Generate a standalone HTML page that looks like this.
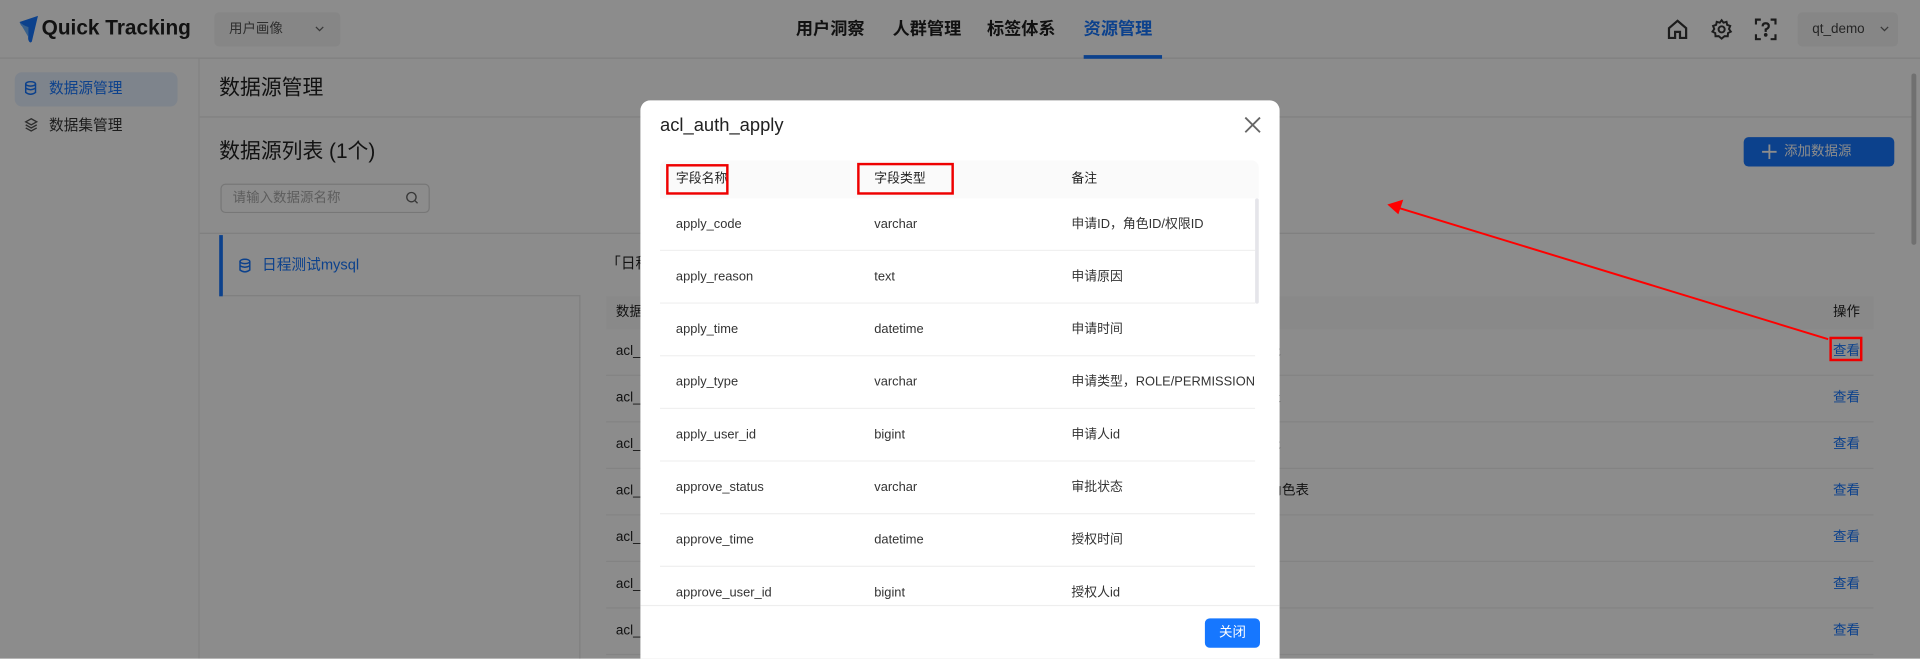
<!DOCTYPE html>
<html><head><meta charset="utf-8">
<style>
*{box-sizing:border-box;margin:0;padding:0}
html,body{width:1920px;height:659px;overflow:hidden;background:#fff}
body{font-family:"Liberation Sans","Noto Sans CJK SC",sans-serif;color:#222;line-height:1.2}
#w{position:absolute;left:0;top:0;width:1568px;height:538px;transform:scale(1.22449);transform-origin:0 0;background:#fff;overflow:hidden}
.a{position:absolute;white-space:nowrap}
.hdr{position:absolute;left:0;top:0;width:1568px;height:48px;border-bottom:1px solid #e8e8e8;background:#fff}
.nav{font-size:14px;font-weight:bold;color:#1f1f1f;top:15px}
.sb{position:absolute;left:0;top:48px;width:163px;height:490px;border-right:1px solid #eee;background:#fff}
.row{position:absolute;left:495px;width:1035px;height:38px;border-bottom:1px solid #eee;font-size:11px}
.row span{top:12px!important}
.mask{position:absolute;left:0;top:0;width:1568px;height:538px;background:rgba(0,0,0,.45)}
.modal{position:absolute;left:523px;top:82px;width:522px;height:470px;background:#fff;border-radius:8px;overflow:hidden}
.mr{position:absolute;left:16px;width:486px;height:43px;border-bottom:1px solid #f0f0f0;font-size:10.5px;color:#333}
.mr span{position:absolute;top:14px;white-space:nowrap;line-height:14px}
</style></head><body>
<div id="w">
<div class="hdr">
 <svg class="a" style="left:15px;top:12px" width="18" height="24" viewBox="0 0 18 24"><path d="M1 6 L16 1 L11 22 Q9 24 8 20 L8 10 Q3 12 1 6Z" fill="#1677ff"/><path d="M1 6 Q4 9 8 10 L8 18Z" fill="#69b1ff"/></svg>
 <div class="a" style="left:34px;top:13px;font-size:17px;font-weight:bold;color:#222">Quick Tracking</div>
 <div class="a" style="left:175px;top:10px;width:103px;height:28px;background:#f5f5f5;border-radius:4px;font-size:11px;color:#555;padding:8px 0 0 12px">用户画像<svg style="position:absolute;left:82px;top:11px" width="8" height="5" viewBox="0 0 8 5" fill="none" stroke="#666"><path d="M1 1L4 4L7 1"/></svg></div>
 <div class="a nav" style="left:650px">用户洞察</div>
 <div class="a nav" style="left:729px">人群管理</div>
 <div class="a nav" style="left:806px">标签体系</div>
 <div class="a nav" style="left:885px;color:#1677ff">资源管理</div>
 <div class="a" style="left:885px;top:45px;width:64px;height:3px;background:#1677ff"></div>
 <svg class="a" style="left:1361px;top:15px" width="18" height="18" viewBox="0 0 18 18" fill="none" stroke="#333" stroke-width="1.8"><path d="M2 8 L9 2 L16 8 V16 H11 V11 H7 V16 H2Z"/></svg>
 <svg class="a" style="left:1397px;top:15px" width="18" height="18" viewBox="0 0 18 18" fill="none" stroke="#333" stroke-width="1.6"><circle cx="9" cy="9" r="2.5"/><path d="M9 1.5 L10.5 3.5 L13 2.8 L13.5 5.3 L16 6.2 L15 8.7 L16.5 10.8 L14.2 12 L14 14.6 L11.4 14.5 L9 16.5 L6.6 14.5 L4 14.6 L3.8 12 L1.5 10.8 L3 8.7 L2 6.2 L4.5 5.3 L5 2.8 L7.5 3.5Z"/></svg>
 <svg class="a" style="left:1433px;top:15px" width="18" height="18" viewBox="0 0 18 18" fill="none" stroke="#333" stroke-width="1.8"><path d="M1 5V1H5M13 1H17V5M17 13V17H13M5 17H1V13"/><path d="M6.5 6.5Q6.5 4 9 4Q11.5 4 11.5 6.3Q11.5 8 9 9V11"/><circle cx="9" cy="13.5" r=".6" fill="#333"/></svg>
 <div class="a" style="left:1468px;top:10px;width:82px;height:28px;background:#f5f5f5;border-radius:4px;font-size:11px;color:#444;padding:8px 0 0 12px">qt_demo<svg style="position:absolute;left:67px;top:11px" width="8" height="5" viewBox="0 0 8 5" fill="none" stroke="#666"><path d="M1 1L4 4L7 1"/></svg></div>
</div>
<div class="sb">
 <div class="a" style="left:12px;top:11px;width:133px;height:28px;background:#e6f0ff;border-radius:6px"></div>
 <svg class="a" style="left:20px;top:18px" width="10" height="12" viewBox="0 0 10 12" fill="none" stroke="#1677ff" stroke-width="1.2"><ellipse cx="5" cy="2.5" rx="4" ry="1.8"/><path d="M1 2.5V9.5Q5 12.5 9 9.5V2.5M1 6Q5 8.5 9 6"/></svg>
 <div class="a" style="left:40px;top:17px;font-size:12px;color:#1677ff">数据源管理</div>
 <svg class="a" style="left:20px;top:48px" width="11" height="12" viewBox="0 0 11 12" fill="none" stroke="#555" stroke-width="1.1"><path d="M5.5 1L10 3.5L5.5 6L1 3.5Z"/><path d="M1 6L5.5 8.5L10 6M1 8.5L5.5 11L10 8.5"/></svg>
 <div class="a" style="left:40px;top:47px;font-size:12px;color:#333">数据集管理</div>
</div>
<div class="a" style="left:179px;top:62px;font-size:17px;color:#222">数据源管理</div>
<div class="a" style="left:163px;top:95px;width:1400px;height:1px;background:#e8e8e8"></div>
<div class="a" style="left:179px;top:114px;font-size:17px;color:#222">数据源列表 (1个)</div>
<div class="a" style="left:1424px;top:112px;width:123px;height:24px;background:#1677ff;border-radius:4px;color:#fff;font-size:11px;line-height:24px;padding-left:16px"><svg style="position:absolute;left:15px;top:6px" width="12" height="12" viewBox="0 0 12 12" stroke="#fff" stroke-width="1.5"><path d="M6 0V12M0 6H12"/></svg><span style="position:absolute;left:33px">添加数据源</span></div>
<div class="a" style="left:180px;top:150px;width:171px;height:24px;border:1px solid #d9d9d9;border-radius:4px;font-size:11px;color:#aaa;padding:5px 0 0 9px">请输入数据源名称<svg style="position:absolute;left:150px;top:5px" width="11" height="11" viewBox="0 0 11 11" fill="none" stroke="#666" stroke-width="1.1"><circle cx="5" cy="5" r="3.8"/><path d="M8 8L10 10"/></svg></div>
<div class="a" style="left:163px;top:190px;width:1368px;height:1px;background:#e8e8e8"></div>
<div class="a" style="left:179px;top:192px;width:3px;height:50px;background:#1677ff"></div>
<svg class="a" style="left:195px;top:211px" width="10" height="12" viewBox="0 0 10 12" fill="none" stroke="#1677ff" stroke-width="1.2"><ellipse cx="5" cy="2.5" rx="4" ry="1.8"/><path d="M1 2.5V9.5Q5 12.5 9 9.5V2.5M1 6Q5 8.5 9 6"/></svg>
<div class="a" style="left:214px;top:209px;font-size:12px;color:#1677ff">日程测试mysql</div>
<div class="a" style="left:182px;top:241px;width:292px;height:1px;background:#e8e8e8"></div>
<div class="a" style="left:473px;top:241px;width:1px;height:300px;background:#e8e8e8"></div>
<div class="a" style="left:495px;top:208px;font-size:12px;color:#222">「日程测试mysql」</div>
<div class="a" style="left:495px;top:242px;width:1035px;height:27px;background:#fafafa;font-size:11px"><span class="a" style="left:8px;top:7px">数据表</span><span class="a" style="left:1002px;top:7px">操作</span></div>
<div class="row" style="top:269px"><span class="a" style="left:8px">acl_auth_apply</span><span class="a" style="left:540px">表</span><span class="a" style="left:1002px;color:#1677ff">查看</span></div>
<div class="row" style="top:307px"><span class="a" style="left:8px">acl_auth</span><span class="a" style="left:540px">表</span><span class="a" style="left:1002px;color:#1677ff">查看</span></div>
<div class="row" style="top:345px"><span class="a" style="left:8px">acl_c</span><span class="a" style="left:540px">表</span><span class="a" style="left:1002px;color:#1677ff">查看</span></div>
<div class="row" style="top:383px"><span class="a" style="left:8px">acl_c</span><span class="a" style="left:530px">的角色表</span><span class="a" style="left:1002px;color:#1677ff">查看</span></div>
<div class="row" style="top:421px"><span class="a" style="left:8px">acl_p</span><span class="a" style="left:1002px;color:#1677ff">查看</span></div>
<div class="row" style="top:459px"><span class="a" style="left:8px">acl_r</span><span class="a" style="left:1002px;color:#1677ff">查看</span></div>
<div class="row" style="top:497px"><span class="a" style="left:8px">acl_r</span><span class="a" style="left:1002px;color:#1677ff">查看</span></div>
<div class="a" style="left:1561px;top:60px;width:4px;height:140px;background:#ccc;border-radius:2px"></div>
<div class="mask"></div>
<div class="modal">
 <div class="a" style="left:16px;top:12px;font-size:15px;color:#222">acl_auth_apply</div>
 <svg class="a" style="left:493px;top:13px" width="14" height="14" viewBox="0 0 14 14" stroke="#666" stroke-width="1.5"><path d="M1 1L13 13M13 1L1 13"/></svg>
 <div class="a" style="left:16px;top:49px;width:489px;height:31px;background:#fafafa;border-radius:6px 6px 0 0;font-size:10.5px;color:#222"><span class="a" style="left:13px;top:9px">字段名称</span><span class="a" style="left:175px;top:9px">字段类型</span><span class="a" style="left:336px;top:9px">备注</span></div>
 <div class="mr" style="top:80px"><span style="left:13px">apply_code</span><span style="left:175px">varchar</span><span style="left:336px">申请ID，角色ID/权限ID</span></div>
 <div class="mr" style="top:123px"><span style="left:13px">apply_reason</span><span style="left:175px">text</span><span style="left:336px">申请原因</span></div>
 <div class="mr" style="top:166px"><span style="left:13px">apply_time</span><span style="left:175px">datetime</span><span style="left:336px">申请时间</span></div>
 <div class="mr" style="top:209px"><span style="left:13px">apply_type</span><span style="left:175px">varchar</span><span style="left:336px">申请类型，ROLE/PERMISSION</span></div>
 <div class="mr" style="top:252px"><span style="left:13px">apply_user_id</span><span style="left:175px">bigint</span><span style="left:336px">申请人id</span></div>
 <div class="mr" style="top:295px"><span style="left:13px">approve_status</span><span style="left:175px">varchar</span><span style="left:336px">审批状态</span></div>
 <div class="mr" style="top:338px"><span style="left:13px">approve_time</span><span style="left:175px">datetime</span><span style="left:336px">授权时间</span></div>
 <div class="a" style="left:0;top:381px;width:522px;height:31px;overflow:hidden"><div class="mr" style="top:0;border:0"><span style="left:13px">approve_user_id</span><span style="left:175px">bigint</span><span style="left:336px">授权人id</span></div></div>
 <div class="a" style="left:502px;top:80px;width:3px;height:86px;background:#e5e5ea;border-radius:2px"></div>
 <div class="a" style="left:0;top:412px;width:522px;height:1px;background:#eee"></div>
 <div class="a" style="left:461px;top:423px;width:45px;height:24px;background:#1677ff;border-radius:4px;color:#fff;font-size:11px;text-align:center;line-height:24px">关闭</div>
 <div class="a" style="left:21px;top:52px;width:51px;height:25px;border:2px solid #e00"></div>
 <div class="a" style="left:177px;top:51px;width:79px;height:26px;border:2px solid #e00"></div>
</div>
<div class="a" style="left:1494px;top:275px;width:27px;height:20px;border:2px solid #e00"></div>
<svg class="a" style="left:0;top:0" width="1568" height="538"><line x1="1493" y1="277" x2="1143" y2="170" stroke="#f00" stroke-width="1.6"/><path d="M1133 167 L1146 163 L1142 175Z" fill="#f00"/></svg>
</div>
</body></html>
